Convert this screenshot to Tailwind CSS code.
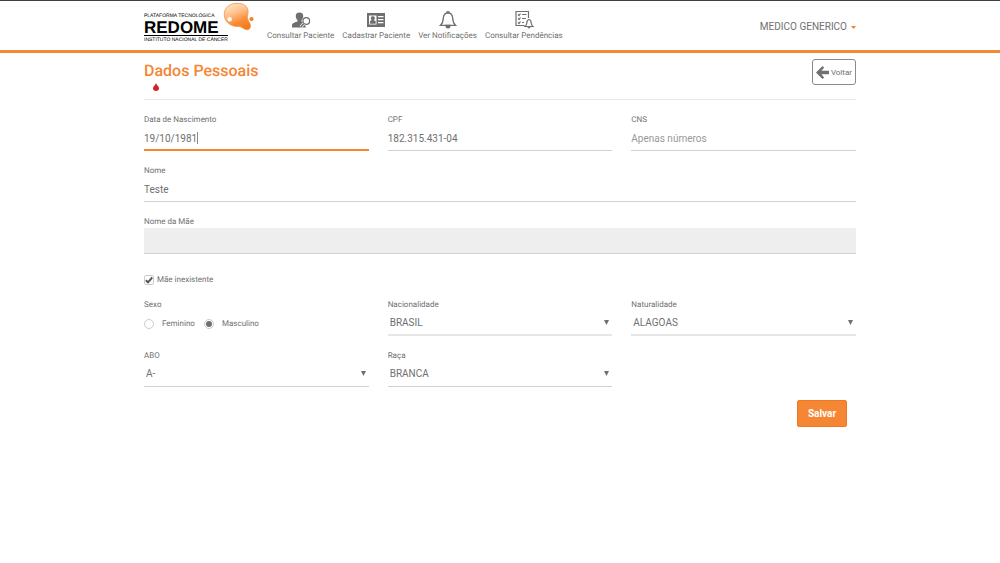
<!DOCTYPE html>
<html lang="pt-BR">
<head>
<meta charset="utf-8">
<meta name="viewport" content="width=device-width, initial-scale=1">
<title>REDOME - Dados Pessoais</title>
<script src="https://cdn.jsdelivr.net/npm/@tailwindcss/browser@4"></script>
</head>
<body class="min-h-screen bg-white font-['Roboto',sans-serif] text-[10px] text-[#6f6f6f] [text-rendering:geometricPrecision]">
<header class="border-t border-b-3 border-t-[#3f3f46] border-b-[#f58a36]">
  <div class="mx-auto flex h-[49px] w-full max-w-[712px] items-start">
    <a href="#" aria-label="REDOME" class="relative block w-[112px] font-['Liberation_Sans',sans-serif] text-black">
      <span class="block pt-3 text-[5px] leading-[7px] whitespace-nowrap">PLATAFORMA TECNOLÓGICA</span>
      <span class="block text-[17px] leading-[15px] font-bold">REDOME</span>
      <span class="block w-[84px] border-t border-black pt-px text-[5px] leading-[6px] whitespace-nowrap">INSTITUTO NACIONAL DE CÂNCER</span>
      <svg class="absolute top-0 left-[79px] h-8 w-8" viewBox="0 0 32 32" aria-hidden="true">
        <defs>
          <linearGradient id="drop" x1=".3" y1="0" x2=".7" y2="1"><stop offset="0" stop-color="#ffe3c6"/><stop offset=".35" stop-color="#ffc08a"/><stop offset=".7" stop-color="#fb8b32"/><stop offset="1" stop-color="#f47a1c"/></linearGradient>
        </defs>
        <path d="M12 2.500C18 1.500 24 4 25 9C25.500 13 23.500 16 25 19C26 21.500 27.500 22 27.500 25C27.500 28 25 29.500 22.500 28.500C19.500 27.500 19 25.500 15.500 25.500C9 26 3 22 1.500 16C0 9 5 3 12 2.500Z" fill="url(#drop)" stroke="#f6924a" stroke-width=".8"/>
        <circle cx="6.700" cy="18.200" r="2.200" fill="#fff"/>
        <circle cx="28.500" cy="18" r="2.100" fill="#f58220"/>
      </svg>
    </a>
    <nav class="ml-[11px] flex gap-2 pt-2 text-[8px] leading-[11px]">
      <a href="#" class="flex flex-col items-center gap-px"><svg class="h-5 w-5" viewBox="0 0 20 20" aria-hidden="true"><path fill="#6f6f6f" d="M8.500 3.500C11 3.500 12.500 5 12.200 7.500C12 9.400 11.300 10.300 10.600 11V12.500L13 13.700L15 18.500H1V16C1 14.500 2.500 13.700 6.500 12.500V11C5.500 10.300 5 9.200 4.800 7.500C4.500 5 6 3.500 8.500 3.500Z"/><circle cx="15.300" cy="12" r="3.300" fill="#fff" stroke="#6f6f6f" stroke-width="1.200"/><path d="M12.800 14.500L9.800 18" stroke="#fff" stroke-width="3"/><path d="M12.800 14.500L9.800 18" stroke="#6f6f6f" stroke-width="1.700"/></svg>Consultar Paciente</a>
      <a href="#" class="flex flex-col items-center gap-px"><svg class="h-5 w-5" viewBox="0 0 20 20" aria-hidden="true"><path fill="#6f6f6f" d="M1 4H19V18H1Z"/><path fill="#fff" d="M3 6.500H10.500V15.500H3ZM12 7H17.500V8.200H12ZM12 10H17.500V11.200H12ZM12 13H17.500V14.200H12Z"/><path fill="#6f6f6f" d="M6.800 7.300A1.900 1.900 0 0 1 7.800 10.900L9.700 12.300V14.700H3.900V12.300L5.800 10.900A1.900 1.900 0 0 1 6.800 7.300Z"/></svg>Cadastrar Paciente</a>
      <a href="#" class="flex flex-col items-center gap-px"><svg class="h-5 w-5" viewBox="0 0 20 20" fill="none" stroke="#6f6f6f" stroke-width="1.300" aria-hidden="true"><path d="M10 4C6.800 4 5.500 6.500 5.300 9C5.200 12.500 4.500 14.500 2.500 16.300H17.500C15.500 14.500 14.800 12.500 14.700 9C14.500 6.500 13.200 4 10 4Z"/><path d="M9 3.800V2.800H11V3.800M8 16.500C8 19.500 12 19.500 12 16.500Z" fill="#6f6f6f"/></svg>Ver Notificações</a>
      <a href="#" class="flex flex-col items-center gap-px"><svg class="h-5 w-5" viewBox="0 0 20 20" fill="none" stroke="#6f6f6f" stroke-width="1.200" aria-hidden="true"><path d="M10.500 16.500H2V2.500H14.500V9"/><path d="M4 5.500L5 6.500L6.500 4.500M4 9.500L5 10.500L6.500 8.500M4 13.500L5 14.500L6.500 12.500M8 5.500H12.500M8 9.500H12M8 13.500H10"/><path d="M15 10.500C12.800 10.500 13 13 12.700 14.500C12.500 16 11.800 16.800 11 17.500H19C18.200 16.800 17.500 16 17.300 14.500C17 13 17.200 10.500 15 10.500ZM14 17.700C14 19.200 16 19.200 16 17.700"/></svg>Consultar Pendências</a>
    </nav>
    <button type="button" class="ml-auto flex items-center gap-1 pt-5 text-[10px] leading-[12px]">MEDICO GENERICO <svg class="h-[3px] w-[5px]" viewBox="0 0 5 3" aria-hidden="true"><path d="M0 0H5L2.500 3Z" fill="#f58220"/></svg></button>
  </div>
</header>
<main class="mx-auto w-full max-w-[712px]">
  <div class="flex h-[47px] items-start justify-between border-b border-[#e8e8e8] pt-[6px]">
    <div>
      <h1 class="pt-[3px] text-[16px] leading-[18px] font-medium text-[#f58634]">Dados Pessoais</h1>
      <svg class="mt-[3px] ml-[9px] h-[8px] w-[6px]" viewBox="0 0 6 8" role="img" aria-label="Tipo sanguíneo"><path d="M3 0C3.500 2 6 3.300 6 5.200C6 7 4.700 8 3 8S0 7 0 5.200C0 3.300 2.500 2 3 0Z" fill="#d2232a"/></svg>
    </div>
    <button type="button" class="flex h-[26px] items-center gap-[2px] rounded-[3px] border border-[#8a8a8a] px-[3px] text-[8px]"><svg class="h-[13px] w-[13px]" viewBox="0 0 12 12" aria-hidden="true"><path d="M0 6L6 0L7.500 1.500L5 4.300H12V7.700H5L7.500 10.500L6 12Z" fill="#6f6f6f"/></svg><span class="pt-[2px]">Voltar</span></button>
  </div>
  <form class="flex flex-col pt-[13px]">
    <div class="grid grid-cols-3 gap-x-[19px] gap-y-[13px]">
      <div class="flex flex-col">
        <label for="nasc" class="pt-px text-[8px] leading-[12px]">Data de Nascimento</label>
        <div class="flex h-[25px] items-center border-b-2 border-[#f58634] pt-px"><input id="nasc" type="text" value="19/10/1981" class="field-sizing-content outline-none"><span class="h-3 w-px bg-[#8a8a8a]"></span></div>
      </div>
      <div class="flex flex-col">
        <label for="cpf" class="pt-px text-[8px] leading-[12px]">CPF</label>
        <input id="cpf" type="text" value="182.315.431-04" class="h-[25px] w-full border-b border-[#d2d2d2] outline-none">
      </div>
      <div class="flex flex-col">
        <label for="cns" class="pt-px text-[8px] leading-[12px]">CNS</label>
        <input id="cns" type="text" placeholder="Apenas números" class="h-[25px] w-full border-b border-[#d2d2d2] outline-none placeholder:text-[#999999]">
      </div>
      <div class="col-span-3 flex flex-col">
        <label for="nome" class="pt-px text-[8px] leading-[12px]">Nome</label>
        <input id="nome" type="text" value="Teste" class="h-[25px] w-full border-b border-[#d2d2d2] outline-none">
      </div>
      <div class="col-span-3 flex flex-col">
        <label for="mae" class="pt-px text-[8px] leading-[12px]">Nome da Mãe</label>
        <input id="mae" type="text" disabled class="h-[26px] w-full border-b border-[#d2d2d2] bg-[#eeeeee]">
      </div>
    </div>
    <label class="mt-5 flex h-3 items-center gap-[3px] text-[8px] leading-[12px]">
      <input type="checkbox" checked class="peer sr-only">
      <span class="flex h-[10px] w-[10px] items-center justify-center rounded-[2px] border border-[#cccccc]"><svg class="h-[8px] w-[8px]" viewBox="0 0 8 8" aria-hidden="true"><path d="M.8 4.200L3 6.300L7.200 1.500" fill="none" stroke="#555555" stroke-width="1.900"/></svg></span>
      Mãe inexistente
    </label>
    <div class="mt-3 grid grid-cols-3 gap-x-[19px] gap-y-[13px]">
      <fieldset>
        <legend class="pt-px text-[8px] leading-[12px]">Sexo</legend>
        <div class="flex items-center pt-[7px] text-[8px]">
          <label class="flex h-[12px] w-[60px] items-center gap-2"><input type="radio" name="sexo" class="h-[10px] w-[10px] appearance-none rounded-full border border-[#cccccc]">Feminino</label>
          <label class="flex h-[12px] items-center gap-2"><input type="radio" name="sexo" checked class="h-[10px] w-[10px] appearance-none rounded-full border border-[#cccccc] bg-[#6f6f6f] bg-clip-content p-px">Masculino</label>
        </div>
      </fieldset>
      <div class="flex flex-col">
        <label for="nac" class="pt-px text-[8px] leading-[12px]">Nacionalidade</label>
        <div class="grid items-center"><select id="nac" class="col-start-1 row-start-1 h-[25px] w-full appearance-none border-b-2 border-[#e6e6e6] pb-px pl-[2px] outline-none"><option>BRASIL</option></select><svg class="col-start-1 row-start-1 mr-[3px] mb-[3px] h-[5px] w-[5px] justify-self-end" viewBox="0 0 5 5" aria-hidden="true"><path d="M0 0H5L2.500 5Z" fill="#6f6f6f"/></svg></div>
      </div>
      <div class="flex flex-col">
        <label for="nat" class="pt-px text-[8px] leading-[12px]">Naturalidade</label>
        <div class="grid items-center"><select id="nat" class="col-start-1 row-start-1 h-[25px] w-full appearance-none border-b-2 border-[#e6e6e6] pb-px pl-[2px] outline-none"><option>ALAGOAS</option></select><svg class="col-start-1 row-start-1 mr-[3px] mb-[3px] h-[5px] w-[5px] justify-self-end" viewBox="0 0 5 5" aria-hidden="true"><path d="M0 0H5L2.500 5Z" fill="#6f6f6f"/></svg></div>
      </div>
      <div class="flex flex-col">
        <label for="abo" class="pt-px text-[8px] leading-[12px]">ABO</label>
        <div class="grid items-center"><select id="abo" class="col-start-1 row-start-1 h-[25px] w-full appearance-none border-b border-[#d2d2d2] pb-[2px] pl-[2px] outline-none"><option>A-</option></select><svg class="col-start-1 row-start-1 mr-[3px] mb-[3px] h-[5px] w-[5px] justify-self-end" viewBox="0 0 5 5" aria-hidden="true"><path d="M0 0H5L2.500 5Z" fill="#6f6f6f"/></svg></div>
      </div>
      <div class="flex flex-col">
        <label for="raca" class="pt-px text-[8px] leading-[12px]">Raça</label>
        <div class="grid items-center"><select id="raca" class="col-start-1 row-start-1 h-[25px] w-full appearance-none border-b border-[#d2d2d2] pb-[2px] pl-[2px] outline-none"><option>BRANCA</option></select><svg class="col-start-1 row-start-1 mr-[3px] mb-[3px] h-[5px] w-[5px] justify-self-end" viewBox="0 0 5 5" aria-hidden="true"><path d="M0 0H5L2.500 5Z" fill="#6f6f6f"/></svg></div>
      </div>
    </div>
    <button type="submit" class="mt-[13px] mr-[9px] h-[27px] w-[50px] self-end rounded-[2px] border border-[#ee7a22] bg-[#f58634] text-[10px] font-bold text-white">Salvar</button>
  </form>
</main>
</body>
</html>
